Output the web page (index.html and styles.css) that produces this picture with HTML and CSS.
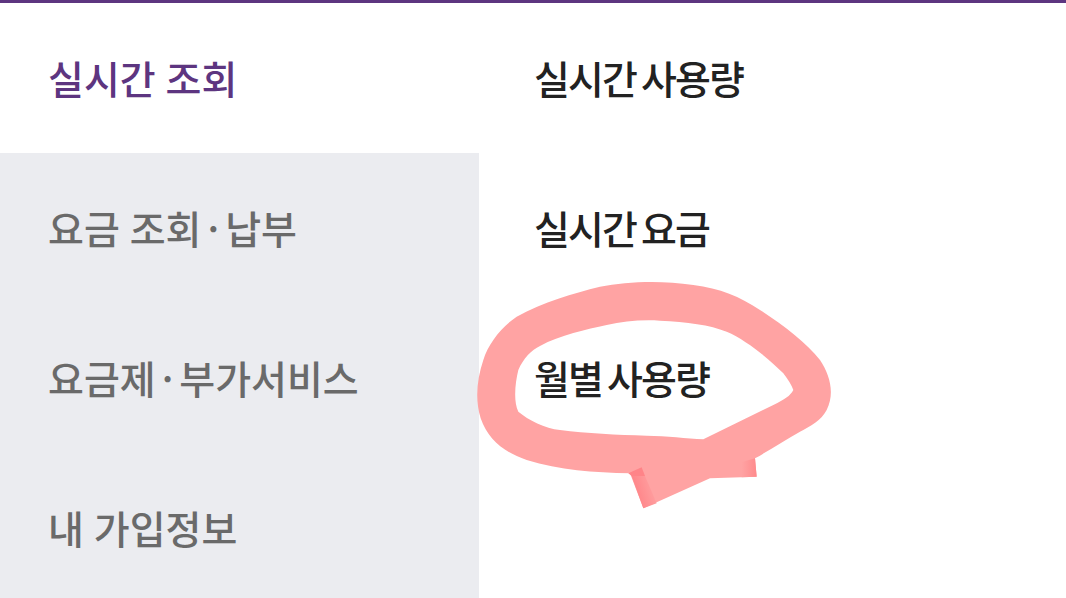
FILE: index.html
```html
<!DOCTYPE html>
<html lang="ko">
<head>
<meta charset="utf-8">
<title>실시간 조회</title>
<link rel="stylesheet" href="styles.css">
</head>
<body>
<div class="menu">
  <ul class="primary">
    <li class="active">실시간 조회</li>
    <li>요금 조회<span class="dot">·</span>납부</li>
    <li>요금제<span class="dot">·</span>부가서비스</li>
    <li>내 가입정보</li>
  </ul>
  <ul class="secondary">
    <li>실시간 사용량</li>
    <li>실시간 요금</li>
    <li>월별 사용량</li>
  </ul>
</div>
<svg class="scribble" viewBox="0 0 1200 750" aria-hidden="true">
  <defs>
    <linearGradient id="tailLeft" gradientUnits="userSpaceOnUse" x1="525" y1="670" x2="590" y2="650">
      <stop offset="0" stop-color="#ff8488"/>
      <stop offset="1" stop-color="#ffa3a3"/>
    </linearGradient>
    <linearGradient id="tailRight" gradientUnits="userSpaceOnUse" x1="845" y1="600" x2="890" y2="600">
      <stop offset="0" stop-color="#ffa3a3"/>
      <stop offset="1" stop-color="#ff8a8c"/>
    </linearGradient>
  </defs>
  <path class="stroke" fill-rule="evenodd" d="M510 610 C400 608 300 600 200 570 C130 545 85 510 62 445 C45 390 50 330 70 270 C85 220 125 170 170 140 C250 95 340 70 420 50 C500 35 600 30 700 45 C780 55 840 80 900 120 C970 165 1040 220 1080 270 C1110 315 1125 370 1100 420 C1085 450 1050 470 1020 485 C975 510 930 540 885 565 L890 620 L750 625 L550 715 Z M730 508 C680 505 620 498 560 497 C470 495 380 490 300 480 C255 475 205 450 175 425 C160 395 165 340 175 300 C190 265 215 240 240 228 C300 195 380 178 440 165 C490 155 540 148 600 152 C680 155 750 165 800 185 C860 210 930 270 970 310 C985 330 995 345 1000 360 C990 378 975 388 940 405 Z"/>
  <path class="tail-left" d="M515 618 L555 618 L590 700 L550 715 Z"/>
  <path class="tail-corner" d="M505 610 L545 592 L555 618 L515 618 Z"/>
  <path class="tail-right" d="M846 576 L885 565 L890 620 L845 622 Z"/>
</svg>
</body>
</html>
```

FILE: styles.css
```css
* { box-sizing: border-box; }
html, body { margin: 0; padding: 0; }
body {
  position: relative;
  width: 1066px;
  height: 598px;
  overflow: hidden;
  background: #fff;
  border-top: 3px solid #5d3580;
  font-family: "Noto Sans CJK KR", "Noto Sans", sans-serif;
  font-size: 39px;
}
.menu { display: flex; }
.primary, .secondary { list-style: none; margin: 0; padding: 0; }
.primary { width: 479px; background: #ebecf0; color: #6a6a6a; font-weight: 500; }
.primary li {
  height: 150px;
  padding: 0 0 3px 48px;
  display: flex;
  align-items: center;
  white-space: pre;
  word-spacing: -1px;
}
.primary li.active { background: #fff; color: #5d3580; }
.dot { margin: 0 6px; }
.secondary { flex: 1; color: #222; }
.secondary li {
  height: 150px;
  padding: 0 0 3px 55px;
  display: flex;
  align-items: center;
  white-space: pre;
  letter-spacing: -1.9px;
  word-spacing: -4px;
  font-weight: 500;
}
.scribble { position: absolute; left: 460px; top: 267px; width: 400px; height: 250px; }
.stroke { fill: #ffa3a3; }
.tail-left { fill: url(#tailLeft); }
.tail-corner { fill: #ff8488; }
.tail-right { fill: url(#tailRight); }
```
